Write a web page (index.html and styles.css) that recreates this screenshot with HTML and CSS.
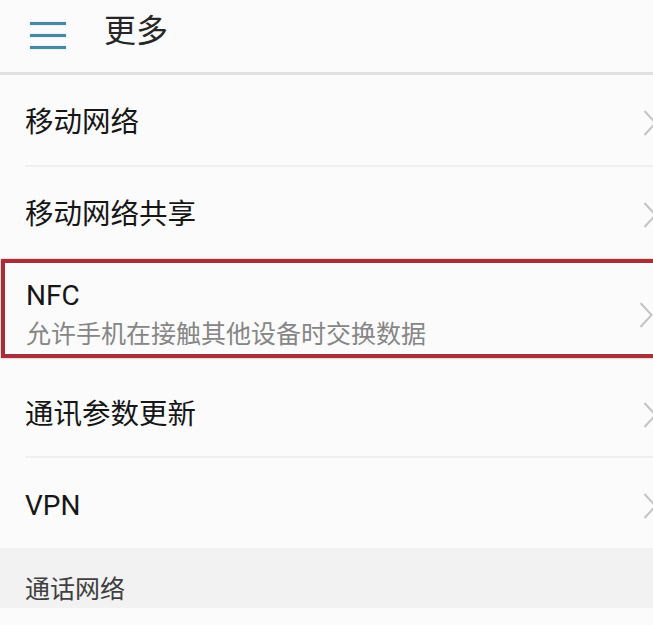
FILE: index.html
```html
<!DOCTYPE html>
<html lang="zh-CN">
<head>
<meta charset="utf-8">
<title>更多</title>
<link rel="stylesheet" href="styles.css">
</head>
<body>
<header class="topbar">
  <svg class="menu-icon" width="36" height="30" viewBox="0 0 36 30">
    <rect x="0" y="1" width="36" height="3" fill="#4b86a3"/>
    <rect x="0" y="13" width="36" height="3" fill="#4b86a3"/>
    <rect x="0" y="25" width="36" height="3" fill="#4b86a3"/>
  </svg>
  <h1 class="page-title">更多</h1>
</header>
<ul class="list">
  <li class="item">
    <div class="item-body row-a">
      <span class="item-title">移动网络</span>
      <svg class="chevron" width="14" height="26" viewBox="0 0 14 26"><polyline points="1.5,1 12.5,13 1.5,25" fill="none" stroke="#c4c4c4" stroke-width="2"/></svg>
    </div>
  </li>
  <li class="item">
    <div class="item-body row-b">
      <span class="item-title">移动网络共享</span>
      <svg class="chevron" width="14" height="26" viewBox="0 0 14 26"><polyline points="1.5,1 12.5,13 1.5,25" fill="none" stroke="#c4c4c4" stroke-width="2"/></svg>
    </div>
  </li>
  <li class="item item-highlight">
    <div class="item-body row-nfc">
      <div class="item-text">
        <span class="item-title latin">NFC</span>
        <span class="item-sub">允许手机在接触其他设备时交换数据</span>
      </div>
      <svg class="chevron" width="14" height="26" viewBox="0 0 14 26"><polyline points="1.5,1 12.5,13 1.5,25" fill="none" stroke="#c4c4c4" stroke-width="2"/></svg>
    </div>
  </li>
  <li class="item">
    <div class="item-body row-c">
      <span class="item-title">通讯参数更新</span>
      <svg class="chevron" width="14" height="26" viewBox="0 0 14 26"><polyline points="1.5,1 12.5,13 1.5,25" fill="none" stroke="#c4c4c4" stroke-width="2"/></svg>
    </div>
  </li>
  <li class="item">
    <div class="item-body row-d">
      <span class="item-title latin">VPN</span>
      <svg class="chevron" width="14" height="26" viewBox="0 0 14 26"><polyline points="1.5,1 12.5,13 1.5,25" fill="none" stroke="#c4c4c4" stroke-width="2"/></svg>
    </div>
  </li>
</ul>
<div class="section-header">通话网络</div>
</body>
</html>
```
FILE: styles.css
```css
html, body {
  margin: 0;
  padding: 0;
}
body {
  width: 653px;
  height: 625px;
  overflow: hidden;
  background: #fbfbfb;
  font-family: "Roboto", "Noto Sans CJK SC", sans-serif;
  color: #161616;
}
.topbar {
  height: 72px;
  display: flex;
  align-items: center;
  padding-left: 30px;
  border-bottom: 3px solid #e0e0e0;
  box-sizing: content-box;
}
.menu-icon {
  display: block;
  margin-top: -1px;
  filter: drop-shadow(0 0 1px #bfe6f5);
}
.page-title {
  margin: 0 0 0 38px;
  font-size: 32px;
  font-weight: 400;
  color: #262626;
  line-height: 40px;
  margin-top: -11px;
}
.list {
  list-style: none;
  margin: 0;
  padding: 0;
}
.item {
  display: flex;
  padding-left: 25px;
}
.item-body {
  flex: 1;
  display: flex;
  align-items: center;
  justify-content: space-between;
  box-sizing: border-box;
}
.row-a {
  height: 92px;
  padding-top: 6px;
  border-bottom: 2px solid #efefef;
}
.row-b {
  height: 92px;
  padding-top: 4px;
}
.row-nfc {
  height: 91px;
  padding-top: 13px;
}
.row-c {
  height: 100px;
  padding-top: 16px;
  border-bottom: 2px solid #efefef;
}
.row-d {
  height: 90px;
  padding-top: 5px;
}
.item-title {
  font-size: 28.5px;
  line-height: 36px;
  color: #161616;
}
.item-title.latin {
  font-size: 28px;
}
.item-text {
  display: flex;
  flex-direction: column;
  gap: 3px;
}
.item-sub {
  font-size: 25px;
  line-height: 36px;
  color: #868686;
}
.chevron {
  display: block;
  margin-right: -4px;
  flex: none;
}
.item-highlight {
  margin-left: 1px;
  padding-left: 21px;
  margin-right: -20px;
  border: 4px solid #a82f38;
  box-shadow: 0 0 2px rgba(210, 80, 90, 0.6);
}
.item-highlight .chevron {
  margin-right: 16px;
}
.section-header {
  height: 60px;
  box-sizing: border-box;
  padding: 18px 0 0 25px;
  display: flex;
  align-items: center;
  background: #f2f2f2;
  font-size: 25px;
  color: #404040;
}
```
